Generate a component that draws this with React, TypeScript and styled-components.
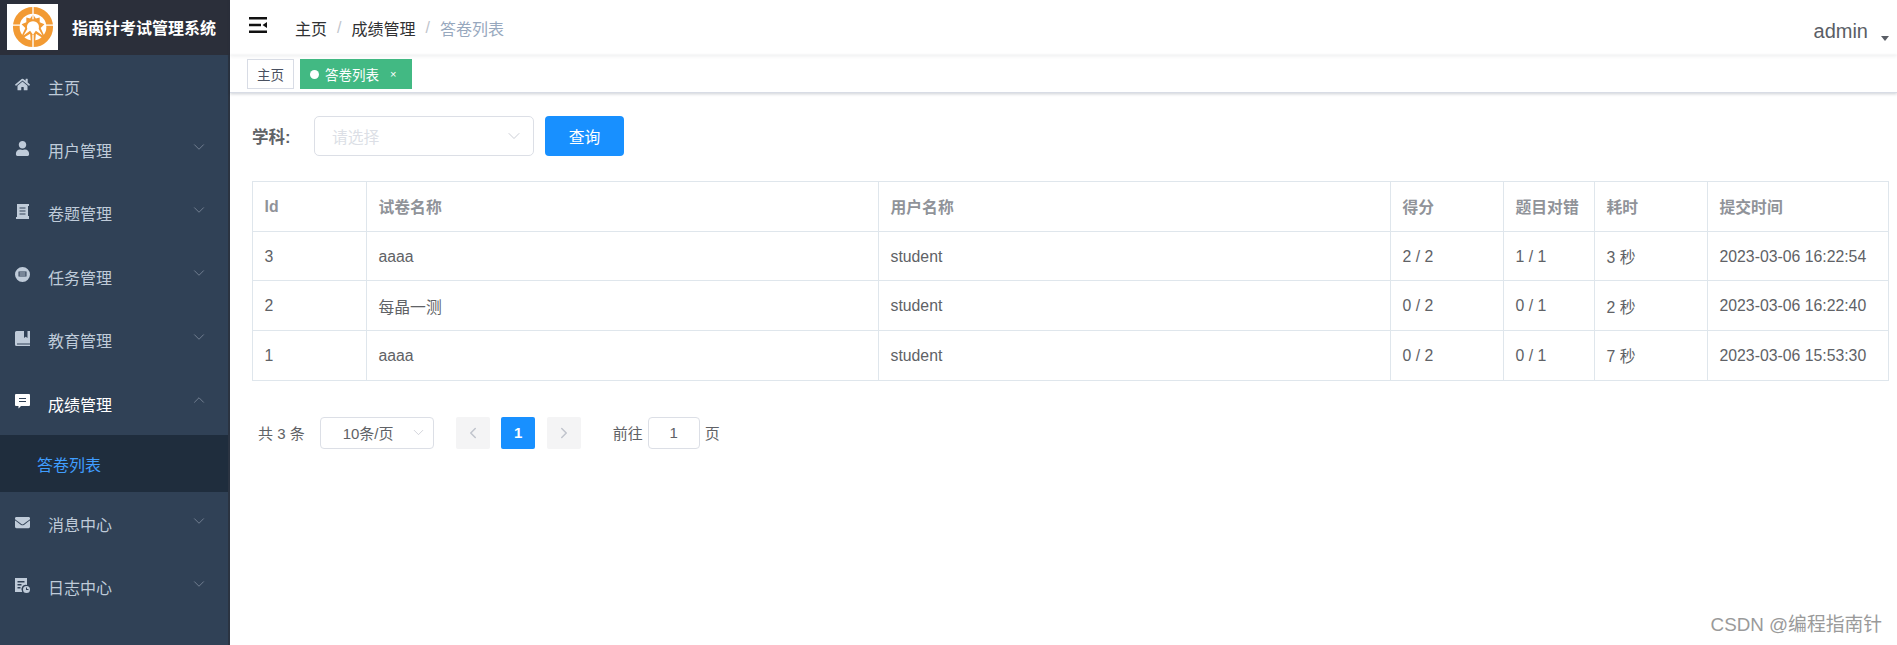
import React from 'react'
import styled, { createGlobalStyle } from 'styled-components'
import { ChevronDown, ChevronUp, ChevronLeft, ChevronRight } from 'lucide-react'
import { FaHome, FaUser, FaEnvelope } from 'react-icons/fa'

const GlobalStyle = createGlobalStyle`
  html, body {
    margin: 0;
    padding: 0;
    background: #fff;
    font-family: "Liberation Sans", "Noto Sans CJK SC", sans-serif;
  }
  * {
    box-sizing: border-box;
  }
`

const Page = styled.div`
  position: relative;
  display: flex;
  width: 1897px;
  height: 645px;
  overflow: hidden;
`

const Sidebar = styled.aside`
  width: 230px;
  flex-shrink: 0;
  background: #304156;
  border-right: 2px solid #2b3442;
`

const Brand = styled.div`
  height: 55px;
  margin-right: -2px;
  display: flex;
  align-items: center;
  gap: 14px;
  padding: 0 0 1px 7px;
  background: #2b2f3a;
  color: #fff;
  font-size: 16px;
  font-weight: 700;
  white-space: nowrap;
`

const LogoBox = styled.div`
  width: 51px;
  height: 46px;
  background: #fff;
  display: flex;
  align-items: center;
  justify-content: center;
`

const MenuItem = styled.div<{ $active?: boolean }>`
  height: 63.4px;
  display: flex;
  align-items: center;
  padding: 0 20px 0 15px;
  color: ${({ $active }) => ($active ? '#fff' : '#bfcbd9')};
  font-size: 16px;
`

const MenuIcon = styled.span`
  width: 15px;
  height: 15px;
  margin: -4px 18px 0 0;
  display: flex;
  align-items: center;
  justify-content: center;
  svg {
    width: 15px;
    height: 15px;
  }
`

const MenuLabel = styled.span`
  flex: 1;
`

const MenuArrow = styled.span`
  display: flex;
  margin-top: -7px;
  color: #8592a3;
`

const SubItem = styled.div`
  height: 57px;
  padding-left: 37px;
  display: flex;
  align-items: center;
  background: #1f2d3d;
  color: #409eff;
  font-size: 16px;
`

const Main = styled.main`
  flex: 1;
  min-width: 0;
`

const Navbar = styled.header`
  height: 55px;
  display: flex;
  align-items: center;
  padding: 0 8px 0 19px;
  position: relative;
  box-shadow: 0 1px 4px rgba(0, 21, 41, 0.08);
`

const Hamburger = styled.svg`
  width: 18px;
  height: 16px;
  margin: -6px 28px 0 0;
`

const Crumb = styled.span<{ $current?: boolean }>`
  font-size: 16px;
  color: ${({ $current }) => ($current ? '#97a8be' : '#303133')};
`

const CrumbSep = styled.span`
  margin: 0 10px;
  color: #c0c4cc;
  font-size: 16px;
`

const UserBox = styled.div`
  margin-left: auto;
  display: flex;
  align-items: center;
  color: #5a5e66;
  font-size: 20px;
  gap: 13px;
  margin-top: 8px;
`

const Caret = styled.i`
  width: 0;
  height: 0;
  margin-top: 13px;
  border-left: 4px solid transparent;
  border-right: 4px solid transparent;
  border-top: 5px solid #5a5e66;
`

const TagsBar = styled.div`
  height: 38px;
  display: flex;
  align-items: flex-start;
  gap: 6px;
  padding: 4px 0 0 17px;
  background: #fff;
  border-bottom: 1px solid #d8dce5;
  box-shadow: 0 1px 3px rgba(0, 21, 41, 0.2);
`

const Tag = styled.div<{ $active?: boolean }>`
  height: 30px;
  display: flex;
  align-items: center;
  padding: 0 ${({ $active }) => ($active ? '15px' : '9px')} 0 9px;
  font-size: 13.5px;
  border: 1px solid ${({ $active }) => ($active ? '#42b983' : '#d8dce5')};
  background: ${({ $active }) => ($active ? '#42b983' : '#fff')};
  color: ${({ $active }) => ($active ? '#fff' : '#495060')};
`

const TagDot = styled.i`
  width: 9px;
  height: 9px;
  margin-right: 6px;
  border-radius: 50%;
  background: #fff;
`

const TagClose = styled.span`
  margin-left: 11px;
  font-size: 11px;
  line-height: 1;
`

const Content = styled.section`
  padding: 23px 9px 0 22px;
`

const Toolbar = styled.div`
  display: flex;
  align-items: center;
  height: 40px;
`

const FieldLabel = styled.label`
  width: 62px;
  font-size: 16.5px;
  font-weight: 700;
  color: #606266;
`

const SelectBox = styled.div`
  width: 220px;
  height: 40px;
  display: flex;
  align-items: center;
  justify-content: space-between;
  padding: 0 9px 0 17px;
  border: 1px solid #dcdfe6;
  border-radius: 5px;
  color: #dcdfe6;
  font-size: 15.8px;
  svg {
    color: #c0c4cc;
  }
`

const QueryButton = styled.button`
  width: 79px;
  height: 40px;
  margin-left: 11px;
  border: 0;
  border-radius: 4px;
  background: #1890ff;
  color: #fff;
  font: inherit;
  font-size: 15.8px;
`

const Table = styled.table`
  width: 1636px;
  margin-top: 25px;
  table-layout: fixed;
  border-collapse: collapse;
  font-size: 15.8px;
  color: #606266;
  th,
  td {
    height: 49.7px;
    padding: 1px 11.5px 0;
    text-align: left;
    border: 1px solid #dfe6ec;
    white-space: nowrap;
  }
  th {
    color: #909399;
    font-weight: 700;
  }
`

const Pager = styled.div`
  display: flex;
  align-items: center;
  height: 32px;
  margin-top: 36px;
  padding-left: 6px;
  font-size: 15px;
  color: #606266;
`

const PagerSelect = styled.div`
  width: 114px;
  height: 32px;
  margin-left: 15px;
  display: flex;
  align-items: center;
  padding: 0 6px 0 22px;
  justify-content: space-between;
  border: 1px solid #dcdfe6;
  border-radius: 4px;
  svg {
    color: #c0c4cc;
  }
`

const PageButton = styled.div<{ $active?: boolean }>`
  width: 34px;
  height: 32px;
  display: flex;
  align-items: center;
  justify-content: center;
  border-radius: 2px;
  font-weight: 700;
  background: ${({ $active }) => ($active ? '#1890ff' : '#f4f4f5')};
  color: ${({ $active }) => ($active ? '#fff' : '#c0c4cc')};
`

const PageButtons = styled.div`
  display: flex;
  gap: 11.5px;
  margin: 0 32px 0 22px;
`

const JumpInput = styled.div`
  width: 52px;
  height: 32px;
  margin: 0 5px;
  display: flex;
  align-items: center;
  justify-content: center;
  border: 1px solid #dcdfe6;
  border-radius: 4px;
`

const Watermark = styled.div`
  position: absolute;
  right: 15px;
  bottom: 10px;
  font-size: 18.8px;
  line-height: 1;
  color: #9a9a9a;
`

const Logo = () => (
  <svg width="42" height="42" viewBox="0 0 44 44">
    <circle cx="22" cy="22" r="17.5" fill="none" stroke="#f29a33" strokeWidth="7" />
    <path d="M22 9 L25 13 L29 12 L29 17 L34 19 L30 23 L36 36 L25 29 L24 40 L20 40 L19 29 L8 36 L14 23 L10 19 L15 17 L15 12 L19 13 Z" fill="#f29a33" />
    <path d="M22 16 C27 16 29 20 28 24 L32 31 L25 26 L22 30 L19 26 L12 31 L16 24 C15 20 17 16 22 16 Z" fill="#fff" />
    <path d="M22 1V14M22 30V43M1 20H10M34 20H43" stroke="#fff" strokeWidth="1.4" />
  </svg>
)

const DocIcon = () => (
  <svg viewBox="0 0 15 15" fill="currentColor">
    <path d="M2 0h12v2h-1v10h1v3H1v-2h1zM4.500 3.500v1h6v-1zm0 3v1h6v-1zm0 3v1h6v-1z" fillRule="evenodd" />
  </svg>
)

const TaskIcon = () => (
  <svg viewBox="0 0 15 15" fill="currentColor">
    <path d="M7.500 0a7.500 7.500 0 1 1 0 15 7.500 7.500 0 0 1 0-15zM3.500 4.500v5h8v-5zm1 1h6v1h-6zm0 2h6v1h-6z" fillRule="evenodd" />
  </svg>
)

const BookIcon = () => (
  <svg viewBox="0 0 15 15" fill="currentColor">
    <path d="M0 1.500A1.500 1.500 0 0 1 1.500 0H9v7l1.700-1.300L12.500 7V0H15v12.500H2v1h13V15H1.500A1.500 1.500 0 0 1 0 13.500z" />
  </svg>
)

const CommentIcon = () => (
  <svg viewBox="0 0 15 15" fill="currentColor">
    <path d="M1 0h13a1 1 0 0 1 1 1v10a1 1 0 0 1-1 1H6l-2.500 2.500V12H1a1 1 0 0 1-1-1V1a1 1 0 0 1 1-1zm3 4v1h7V4zm0 3v1h7V7z" fillRule="evenodd" />
  </svg>
)

const LogIcon = () => (
  <svg viewBox="0 0 15 15" fill="currentColor">
    <path d="M0 0h12v7a4.500 4.500 0 0 0-4.800 7H0zm2.500 3v1.500h7V3zm0 3v1.500h4V6zm0 3v1.500h3V9z" fillRule="evenodd" />
    <path d="M11.500 8a3.500 3.500 0 1 1 0 7 3.500 3.500 0 0 1 0-7zM11 9.500V12h2.500v-1H12V9.500z" fillRule="evenodd" />
  </svg>
)

const menuTop = [
  { label: '主页', icon: <FaHome /> },
  { label: '用户管理', icon: <FaUser />, arrow: true },
  { label: '卷题管理', icon: <DocIcon />, arrow: true },
  { label: '任务管理', icon: <TaskIcon />, arrow: true },
  { label: '教育管理', icon: <BookIcon />, arrow: true },
]

const menuBottom = [
  { label: '消息中心', icon: <FaEnvelope /> },
  { label: '日志中心', icon: <LogIcon /> },
]

const rows = [
  { id: 3, paper: 'aaaa', user: 'student', score: '2 / 2', right: '1 / 1', cost: '3 秒', time: '2023-03-06 16:22:54' },
  { id: 2, paper: '每晶一测', user: 'student', score: '0 / 2', right: '0 / 1', cost: '2 秒', time: '2023-03-06 16:22:40' },
  { id: 1, paper: 'aaaa', user: 'student', score: '0 / 2', right: '0 / 1', cost: '7 秒', time: '2023-03-06 15:53:30' },
]

const App: React.FC = () => (
  <Page>
    <GlobalStyle />
    <Sidebar>
      <Brand>
        <LogoBox>
          <Logo />
        </LogoBox>
        指南针考试管理系统
      </Brand>
      {menuTop.map((item) => (
        <MenuItem key={item.label}>
          <MenuIcon>{item.icon}</MenuIcon>
          <MenuLabel>{item.label}</MenuLabel>
          {item.arrow && (
            <MenuArrow>
              <ChevronDown size={18} strokeWidth={1} />
            </MenuArrow>
          )}
        </MenuItem>
      ))}
      <MenuItem $active>
        <MenuIcon>
          <CommentIcon />
        </MenuIcon>
        <MenuLabel>成绩管理</MenuLabel>
        <MenuArrow>
          <ChevronUp size={18} strokeWidth={1} />
        </MenuArrow>
      </MenuItem>
      <SubItem>答卷列表</SubItem>
      {menuBottom.map((item) => (
        <MenuItem key={item.label}>
          <MenuIcon>{item.icon}</MenuIcon>
          <MenuLabel>{item.label}</MenuLabel>
          <MenuArrow>
            <ChevronDown size={18} strokeWidth={1} />
          </MenuArrow>
        </MenuItem>
      ))}
    </Sidebar>
    <Main>
      <Navbar>
        <Hamburger viewBox="0 0 18 16">
          <path d="M0 0h18v2.500H0zM0 6.800h12v2.500H0zM0 13.500h18V16H0zM18 5v6l-4.500-3z" fill="#111" />
        </Hamburger>
        <Crumb>主页</Crumb>
        <CrumbSep>/</CrumbSep>
        <Crumb>成绩管理</Crumb>
        <CrumbSep>/</CrumbSep>
        <Crumb $current>答卷列表</Crumb>
        <UserBox>
          admin
          <Caret />
        </UserBox>
      </Navbar>
      <TagsBar>
        <Tag>主页</Tag>
        <Tag $active>
          <TagDot />
          答卷列表
          <TagClose>×</TagClose>
        </Tag>
      </TagsBar>
      <Content>
        <Toolbar>
          <FieldLabel>学科:</FieldLabel>
          <SelectBox>
            请选择
            <ChevronDown size={20} strokeWidth={1} />
          </SelectBox>
          <QueryButton>查询</QueryButton>
        </Toolbar>
        <Table>
          <colgroup>
            <col width="114" />
            <col width="512" />
            <col width="512" />
            <col width="113" />
            <col width="91" />
            <col width="113" />
            <col width="181" />
          </colgroup>
          <thead>
            <tr>
              <th>Id</th>
              <th>试卷名称</th>
              <th>用户名称</th>
              <th>得分</th>
              <th>题目对错</th>
              <th>耗时</th>
              <th>提交时间</th>
            </tr>
          </thead>
          <tbody>
            {rows.map((row) => (
              <tr key={row.id}>
                <td>{row.id}</td>
                <td>{row.paper}</td>
                <td>{row.user}</td>
                <td>{row.score}</td>
                <td>{row.right}</td>
                <td>{row.cost}</td>
                <td>{row.time}</td>
              </tr>
            ))}
          </tbody>
        </Table>
        <Pager>
          共 3 条
          <PagerSelect>
            10条/页
            <ChevronDown size={17} strokeWidth={1} />
          </PagerSelect>
          <PageButtons>
            <PageButton>
              <ChevronLeft size={18} strokeWidth={2} />
            </PageButton>
            <PageButton $active>1</PageButton>
            <PageButton>
              <ChevronRight size={18} strokeWidth={2} />
            </PageButton>
          </PageButtons>
          前往
          <JumpInput>1</JumpInput>
          页
        </Pager>
      </Content>
    </Main>
    <Watermark>CSDN @编程指南针</Watermark>
  </Page>
)

export default App
